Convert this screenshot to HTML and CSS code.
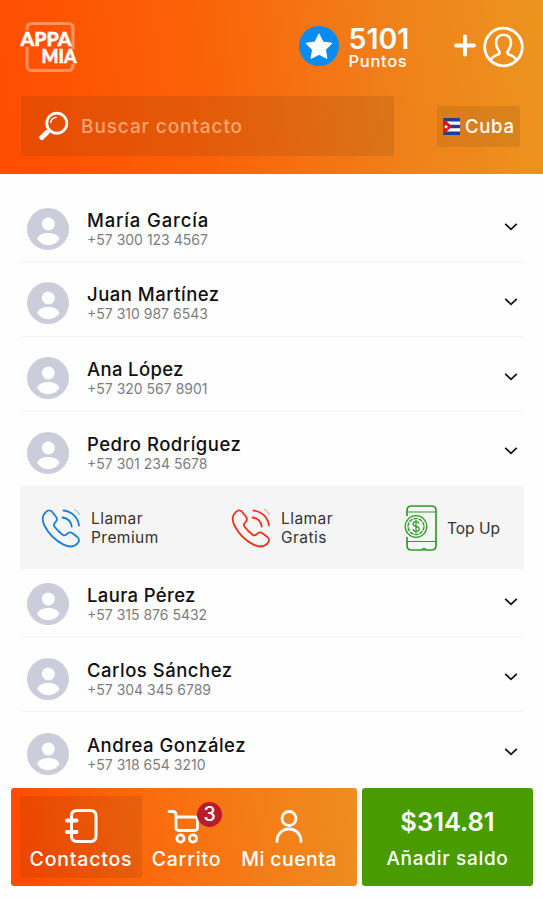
FILE: index.html
```
<!DOCTYPE html>
<html lang="es">
<head>
<meta charset="utf-8">
<title>Appa Mia</title>
<link rel="stylesheet" href="styles.css">
</head>
<body>
<svg width="0" height="0" class="defs">
  <symbol id="avatar" viewBox="0 0 42 42"><circle cx="21" cy="21" r="21" fill="#cbcdda"/><circle cx="21.3" cy="16" r="6.5" fill="#fff"/><path d="M10.3 31.5c0-4 5.200-6.500 11-6.500s11 2.500 11 6.500c-2.500 3.500-6.500 5.700-11 5.700s-8.500-2.200-11-5.700z" fill="#fff"/></symbol>
  <symbol id="chev" viewBox="0 0 14 10"><path d="M1.200 1.800 7 7.300l5.800-5.500" fill="none" stroke="#151515" stroke-width="1.800"/></symbol>
  <symbol id="call" viewBox="0 0 40 40"><g fill="none" stroke="currentColor" stroke-width="1.800" stroke-linecap="round" stroke-linejoin="round"><path d="M5 3.800C7 1.800 9.300 1.800 11 3.700l4 5c1.500 2 1.200 3.800-.6 5.500-1.800 1.600-2 2.800-.8 4.500 2.200 3 5 5.800 8 8 1.700 1.200 3 .9 4.500-.8 1.700-1.800 3.500-2.100 5.500-.6l5 4c1.900 1.700 1.900 4-.1 6-3.500 3.800-8.500 4-14 1.300C14.500 32.500 7.500 25.500 3.400 17.500.8 12 1.300 7.200 5 3.800z"/><path d="M21.500 9.500c5 .7 8.500 4.300 9.200 9.200M22.500 2.500C31 3.500 37 9.500 38 17.500"/><path d="M33.500 1.500c2 1 3.800 2.800 4.800 5" stroke-width="1" opacity=".6"/></g></symbol>
</svg>
<header class="header">
  <div class="topbar">
    <svg class="logo" width="58" height="52" viewBox="0 0 58 52"><g fill="none" stroke="#fff" stroke-opacity=".36" stroke-width="3.200"><path d="M7 9V7.500Q7 2.500 12 2.500h36q5 0 5 5V28M7 26v18.500q0 5 5 5h36q5 0 5-5V43"/></g><text x=".5" y="24.800" textLength="51" lengthAdjust="spacingAndGlyphs">APPA</text><text x="21.500" y="42" textLength="35" lengthAdjust="spacingAndGlyphs">MIA</text></svg>
    <div class="points">
      <svg width="40" height="40" viewBox="0 0 40 40"><circle cx="20" cy="20" r="20" fill="#098bf0"/><path d="m20 8.200 3.900 7.900 8.700 1.200-6.300 6.200 1.500 8.700-7.800-4.100-7.800 4.100 1.500-8.700-6.300-6.200 8.700-1.200z" fill="#fff" stroke="#fff" stroke-width="1.200" stroke-linejoin="round"/></svg>
      <div class="score"><strong>5101</strong><span>Puntos</span></div>
    </div>
    <svg class="adduser" width="70" height="42" viewBox="0 0 70 42" fill="none" stroke="#fff"><path d="M11 10.500v18M2 19.500h18" stroke-width="4" stroke-linecap="round"/><circle cx="49.500" cy="21" r="18.800" stroke-width="2.800"/><path d="M36.500 34c2-4 5.500-4.500 8.500-6 .8-.5.8-2-.2-3.300-1.500-2-2.800-4.500-2.800-7.700 0-5 3-8.300 7.500-8.300s7.500 3.300 7.500 8.300c0 3.200-1.300 5.700-2.800 7.700-1 1.300-1 2.800-.2 3.300 3 1.500 6.500 2 8.500 6" stroke-width="2.600"/></svg>
  </div>
  <div class="searchbar">
    <div class="search">
      <svg width="30" height="30" viewBox="0 0 30 30" fill="none" stroke="#fff"><circle cx="17.800" cy="12.200" r="10" stroke-width="2.800"/><path d="M11.500 12c.4-3.200 2.700-5.400 6-5.800" stroke-width="1.600"/><path d="m11 19-3 3" stroke-width="2.500"/><path d="m8 21.500-5.200 5" stroke-width="5" stroke-linecap="round"/></svg>
      <span>Buscar contacto</span>
    </div>
    <div class="country">
      <svg width="17" height="17" viewBox="0 0 17 17"><path fill="#fff" d="M0 0h17v17H0z"/><path fill="#203b91" d="M0 0h17v3.400H0zM0 6.800h17v3.400H0zM0 13.600h17V17H0z"/><path fill="#d31329" d="M0 0l9 8.500L0 17z"/><path fill="#fff" d="m3 6.300.7 1.600h1.700L4 9l.6 1.700L3 9.700l-1.500 1L2 9 .7 7.900h1.700z"/></svg>
      <span>Cuba</span>
    </div>
  </div>
</header>
<main class="list">
  <div class="row"><svg class="avatar"><use href="#avatar"/></svg><div class="who"><b class="wide">María García</b><span>+57 300 123 4567</span></div><svg class="chev"><use href="#chev"/></svg></div>
  <div class="row"><svg class="avatar"><use href="#avatar"/></svg><div class="who"><b>Juan Martínez</b><span>+57 310 987 6543</span></div><svg class="chev"><use href="#chev"/></svg></div>
  <div class="row"><svg class="avatar"><use href="#avatar"/></svg><div class="who"><b class="narrow">Ana López</b><span>+57 320 567 8901</span></div><svg class="chev"><use href="#chev"/></svg></div>
  <div class="row open"><svg class="avatar"><use href="#avatar"/></svg><div class="who"><b>Pedro Rodríguez</b><span>+57 301 234 5678</span></div><svg class="chev"><use href="#chev"/></svg></div>
  <div class="actions">
    <div class="action premium"><svg width="40" height="40"><use href="#call"/></svg><span>Llamar<br>Premium</span></div>
    <div class="action gratis"><svg width="40" height="40"><use href="#call"/></svg><span>Llamar<br>Gratis</span></div>
    <div class="action topup"><svg width="34" height="46" viewBox="0 0 34 46" fill="none" stroke="#319b25" stroke-width="1.700"><path d="M3 11V5.500Q3 1 7.500 1h20Q32 1 32 5.500v35q0 4.500-4.500 4.500h-20Q3 45 3 40.500V32"/><path d="M3 7h29M3 36.500h29M18 43.500h4" stroke-width="1.200"/><circle cx="12" cy="21.500" r="10.800" stroke-width="1.300"/><circle cx="12" cy="21.500" r="8" stroke-width="1.400" stroke-dasharray="4 1"/><path d="M15 18.500c-.6-1.300-1.600-1.800-3-1.800-1.700 0-3 .9-3 2.300 0 3.300 6.200 1.600 6.200 5 0 1.500-1.400 2.400-3.200 2.400-1.600 0-2.800-.7-3.300-2.100M12 15v13" stroke-width="1.200"/></svg><span>Top Up</span></div>
  </div>
  <div class="row first"><svg class="avatar"><use href="#avatar"/></svg><div class="who"><b class="narrow">Laura Pérez</b><span>+57 315 876 5432</span></div><svg class="chev"><use href="#chev"/></svg></div>
  <div class="row"><svg class="avatar"><use href="#avatar"/></svg><div class="who"><b>Carlos Sánchez</b><span>+57 304 345 6789</span></div><svg class="chev"><use href="#chev"/></svg></div>
  <div class="row open"><svg class="avatar"><use href="#avatar"/></svg><div class="who"><b>Andrea González</b><span>+57 318 654 3210</span></div><svg class="chev"><use href="#chev"/></svg></div>
</main>
<footer class="footer">
  <nav class="nav">
    <div class="tab active"><svg width="36" height="36" viewBox="0 0 36 36" fill="none" stroke="#fff" stroke-width="3"><path d="M8.500 12V8q0-5.500 5.500-5.500h13.500q5.500 0 5.500 5.500v20q0 5.500-5.500 5.500H14q-5.500 0-5.500-5.500V12"/><path d="M4 12.500h9.500M4 24h9.500" stroke-width="4" stroke-linecap="round"/></svg><span>Contactos</span></div>
    <div class="tab cart"><svg width="34" height="36" viewBox="0 0 34 36" fill="none" stroke="#fff" stroke-width="2.800" stroke-linejoin="round" stroke-linecap="round"><path d="M2 3.500h3.500q3.500 0 3.500 3.500v12.500q0 3 3 3h15.500q3 0 3-3V12q0-3-3-3H9"/><circle cx="13.500" cy="30.500" r="3.600"/><circle cx="26" cy="30.500" r="3.600"/></svg><i class="badge">3</i><span>Carrito</span></div>
    <div class="tab account"><svg width="30" height="36" viewBox="0 0 30 36" fill="none" stroke="#fff" stroke-width="2.800" stroke-linecap="round"><circle cx="15" cy="10.500" r="7"/><path d="M3 33.500C3 26 8 21 15 21s12 5 12 12.500"/></svg><span>Mi cuenta</span></div>
  </nav>
  <div class="balance"><strong>$314.81</strong><span>Añadir saldo</span></div>
</footer>
</body>
</html>
```
FILE: styles.css
```
* { box-sizing: border-box; }
body { margin: 0; height: 900px; overflow: hidden; background: #fefefe; font-family: Inter, "Open Sans", sans-serif; display: flex; flex-direction: column; }
svg { display: block; flex: none; }
span, strong, b { white-space: nowrap; }
.defs { position: absolute; }
.header { height: 174px; flex: none; background: linear-gradient(82deg, #ff4e00 3%, #fb6208 38%, #f07f19 70%, #ec951f 100%); padding: 21px 18px 0 20px; color: #fff; }
.topbar { display: flex; height: 75px; align-items: flex-start; }
.logo text { font: 900 18.500px Lato, sans-serif; fill: #fff; stroke: #fff; stroke-width: .5px; }
.points { display: flex; margin: 5px 0 0 220.500px; width: 155.500px; gap: 10px; }
.score { display: flex; flex-direction: column; }
.score strong { font-size: 28.500px; line-height: 27px; font-weight: 600; margin-top: -1px; }
.score span { font-size: 16.500px; line-height: 18px; font-weight: 500; letter-spacing: .7px; }
.adduser { margin-top: 5px; }
.searchbar { display: flex; align-items: center; height: 60px; gap: 43px; padding-left: 1px; }
.search { width: 373px; height: 60px; background: rgba(100, 55, 20, .15); display: flex; align-items: center; padding-left: 18px; gap: 12px; border-radius: 2px; }
.search span { font-size: 19px; font-weight: 500; color: rgba(255, 220, 190, .6); letter-spacing: .9px; }
.country { width: 83px; height: 41px; background: rgba(100, 55, 20, .14); display: flex; align-items: center; gap: 5px; padding-left: 6px; border-radius: 3px; }
.country span { font-size: 18.500px; font-weight: 500; letter-spacing: .7px; }
.list { padding: 13.300px 19px 0 20px; flex: none; }
.row { height: 74.800px; display: flex; align-items: flex-end; padding: 0 6px 11.500px 7px; border-bottom: 1px solid #f3f3f3; }
.row.open { border-color: transparent; }
.row.first { height: 68.500px; }
.avatar { width: 42px; height: 42px; }
.who { display: flex; flex-direction: column; height: 42px; margin-left: 18px; flex: 1; }
.who b { font-size: 18.500px; line-height: 24px; font-weight: 500; color: #111; letter-spacing: .5px; }
.who b.wide { letter-spacing: .85px; }
.who b.narrow { letter-spacing: .35px; }
.who span { font-size: 14px; line-height: 16px; color: #7d7d7d; }
.chev { width: 14px; height: 10px; margin-bottom: 17.500px; }
.actions { height: 82.500px; background: #f5f5f5; border-radius: 2px; display: flex; align-items: center; }
.action { display: flex; align-items: center; gap: 10px; font-size: 15.500px; line-height: 19px; letter-spacing: .45px; }
.premium { color: #1780dc; width: 190px; padding-left: 21px; }
.gratis { color: #f0321c; width: 194px; padding-left: 21px; }
.topup { gap: 9px; letter-spacing: 0; }
.action span { color: #333; padding-top: 1px; }
.footer { position: absolute; left: 11px; top: 788px; width: 522px; height: 98px; display: flex; gap: 5px; color: #fff; }
.nav { width: 346px; background: linear-gradient(82deg, #ff4c00 5%, #fa6c0d 42%, #ee8e20 100%); border-radius: 3px; display: flex; padding: 8px 0 0 9px; }
.tab { position: relative; display: flex; flex-direction: column; align-items: center; padding-top: 12px; height: 82px; font-size: 19.500px; font-weight: 500; letter-spacing: .8px; }
.tab span { line-height: 26px; margin-top: 2px; }
.active { width: 122px; background: rgba(110, 45, 15, .14); border-radius: 3px; }
.cart { width: 89px; }
.account { width: 116px; letter-spacing: .4px; }
.cart svg { margin-right: 5px; }
.badge { position: absolute; left: 55px; top: 6px; width: 25px; height: 25px; border-radius: 50%; background: #b91d2b; font-style: normal; line-height: 25px; text-align: center; letter-spacing: 0; }
.balance { flex: 1; background: #499c00; border-radius: 3px; display: flex; flex-direction: column; align-items: center; padding-top: 18px; }
.balance strong { font-size: 25.500px; line-height: 32px; font-weight: 600; }
.balance span { font-size: 19px; line-height: 26px; margin-top: 8px; font-weight: 500; letter-spacing: .7px; }
```
